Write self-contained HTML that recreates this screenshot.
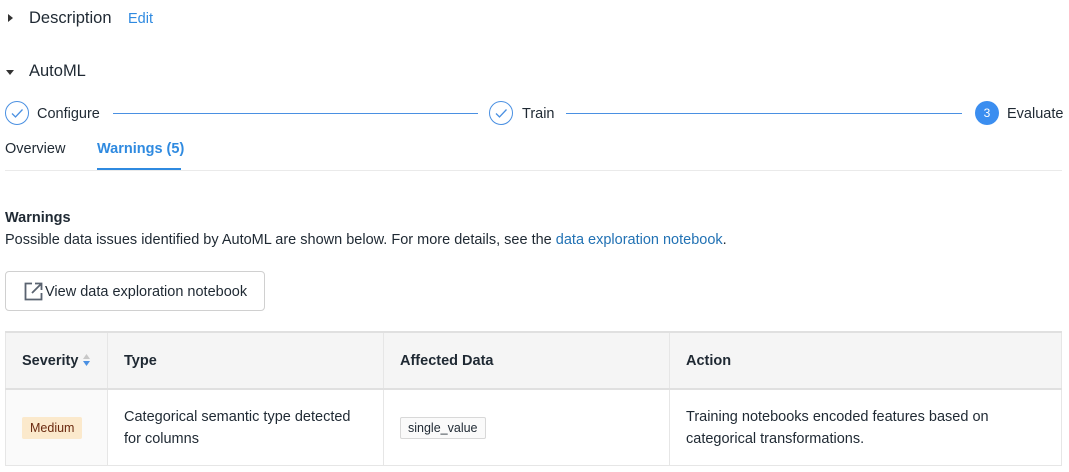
<!DOCTYPE html>
<html><head><style>
body{margin:0;width:1069px;height:472px;overflow:hidden;background:#fff;font-family:"Liberation Sans",Arial,sans-serif;color:#1f2933;position:relative}
.a{position:absolute;white-space:nowrap}
.tri{width:0;height:0;position:absolute}
.circ{position:absolute;width:22px;height:22px;border:1px solid #4a90e2;border-radius:50%;top:101px}
.line{position:absolute;height:1px;background:#4a90e2;top:113px}
table{position:absolute;left:5px;top:331px;width:1057px;border-collapse:collapse;font-size:14.5px;table-layout:fixed}
td,th{border:1px solid #e6e6e6;text-align:left;padding:0 16px;vertical-align:middle;white-space:nowrap}
th{background:#f5f5f5;height:55px;font-weight:bold;border-top:2px solid #e0e0e0;border-bottom:2px solid #e0e0e0}
td{height:75px;line-height:22px}
</style></head><body>
<div class="tri" style="left:8px;top:14px;border-left:5px solid #333;border-top:4px solid transparent;border-bottom:4px solid transparent"></div>
<div class="a" style="left:29px;top:9px;font-size:16.5px">Description</div>
<div class="a" style="left:128px;top:11px;font-size:14.5px;color:#2f8ae0">Edit</div>
<div class="tri" style="left:6px;top:70px;border-top:5px solid #333;border-left:4px solid transparent;border-right:4px solid transparent"></div>
<div class="a" style="left:29px;top:62px;font-size:16.5px">AutoML</div>

<div class="circ" style="left:5px"><svg width="22" height="22" viewBox="0 0 22 22"><path d="M6 11.5l3.5 3.5 7-7.5" fill="none" stroke="#4a90e2" stroke-width="1.3"/></svg></div>
<div class="a" style="left:37px;top:106px;font-size:14.5px">Configure</div>
<div class="line" style="left:113px;width:365px"></div>
<div class="circ" style="left:489px"><svg width="22" height="22" viewBox="0 0 22 22"><path d="M6 11.5l3.5 3.5 7-7.5" fill="none" stroke="#4a90e2" stroke-width="1.3"/></svg></div>
<div class="a" style="left:522px;top:106px;font-size:14.5px">Train</div>
<div class="line" style="left:566px;width:396px"></div>
<div class="a" style="left:975px;top:101px;width:24px;height:24px;border-radius:50%;background:#3b8ef0;color:#fff;font-size:12px;text-align:center;line-height:24px">3</div>
<div class="a" style="left:1007px;top:106px;font-size:14.5px">Evaluate</div>

<div class="a" style="left:5px;top:141px;font-size:14.5px">Overview</div>
<div class="a" style="left:97px;top:141px;font-size:14.5px;color:#2f8ae0;font-weight:bold">Warnings (5)</div>
<div class="a" style="left:97px;top:168px;width:84px;height:2px;background:#2f8ae0"></div>
<div class="a" style="left:5px;top:170px;width:1057px;height:1px;background:#eaeaea"></div>

<div class="a" style="left:5px;top:210px;font-size:14.5px;font-weight:bold">Warnings</div>
<div class="a" style="left:5px;top:232px;font-size:14.5px">Possible data issues identified by AutoML are shown below. For more details, see the <span style="color:#2272b4">data exploration notebook</span>.</div>

<div class="a" style="left:5px;top:271px;width:258px;height:38px;border:1px solid #d0d0d0;border-radius:4px"></div>
<svg class="a" style="left:24px;top:282px" width="19" height="19" viewBox="0 0 19 19"><path d="M8 1.5H1.5v16h16V11" fill="none" stroke="#5a6370" stroke-width="1.8"/><path d="M11 1.5h6.5V8M17.5 1.5L8 11" fill="none" stroke="#5a6370" stroke-width="1.8"/></svg>
<div class="a" style="left:45px;top:284px;font-size:14.5px">View data exploration notebook</div>

<table>
<colgroup><col style="width:102px"><col style="width:276px"><col style="width:286px"><col></colgroup>
<tr><th>Severity <svg width="9" height="14" viewBox="0 0 9 14" style="vertical-align:-2px"><path d="M4.5 1L8 6H1z" fill="#c8c8c8"/><path d="M4.5 13L8 8H1z" fill="#4a90e2"/></svg></th><th>Type</th><th>Affected Data</th><th>Action</th></tr>
<tr><td style="background:#fafafa"><span style="background:#fbe9cc;color:#6b2a10;font-size:12.5px;padding:4px 8px;border-radius:2px">Medium</span></td>
<td>Categorical semantic type detected<br>for columns</td>
<td><span style="border:1px solid #d8d8d8;background:#fafafa;font-size:12.5px;padding:3px 7px;border-radius:2px">single_value</span></td>
<td>Training notebooks encoded features based on<br>categorical transformations.</td></tr>
</table>
</body></html>
